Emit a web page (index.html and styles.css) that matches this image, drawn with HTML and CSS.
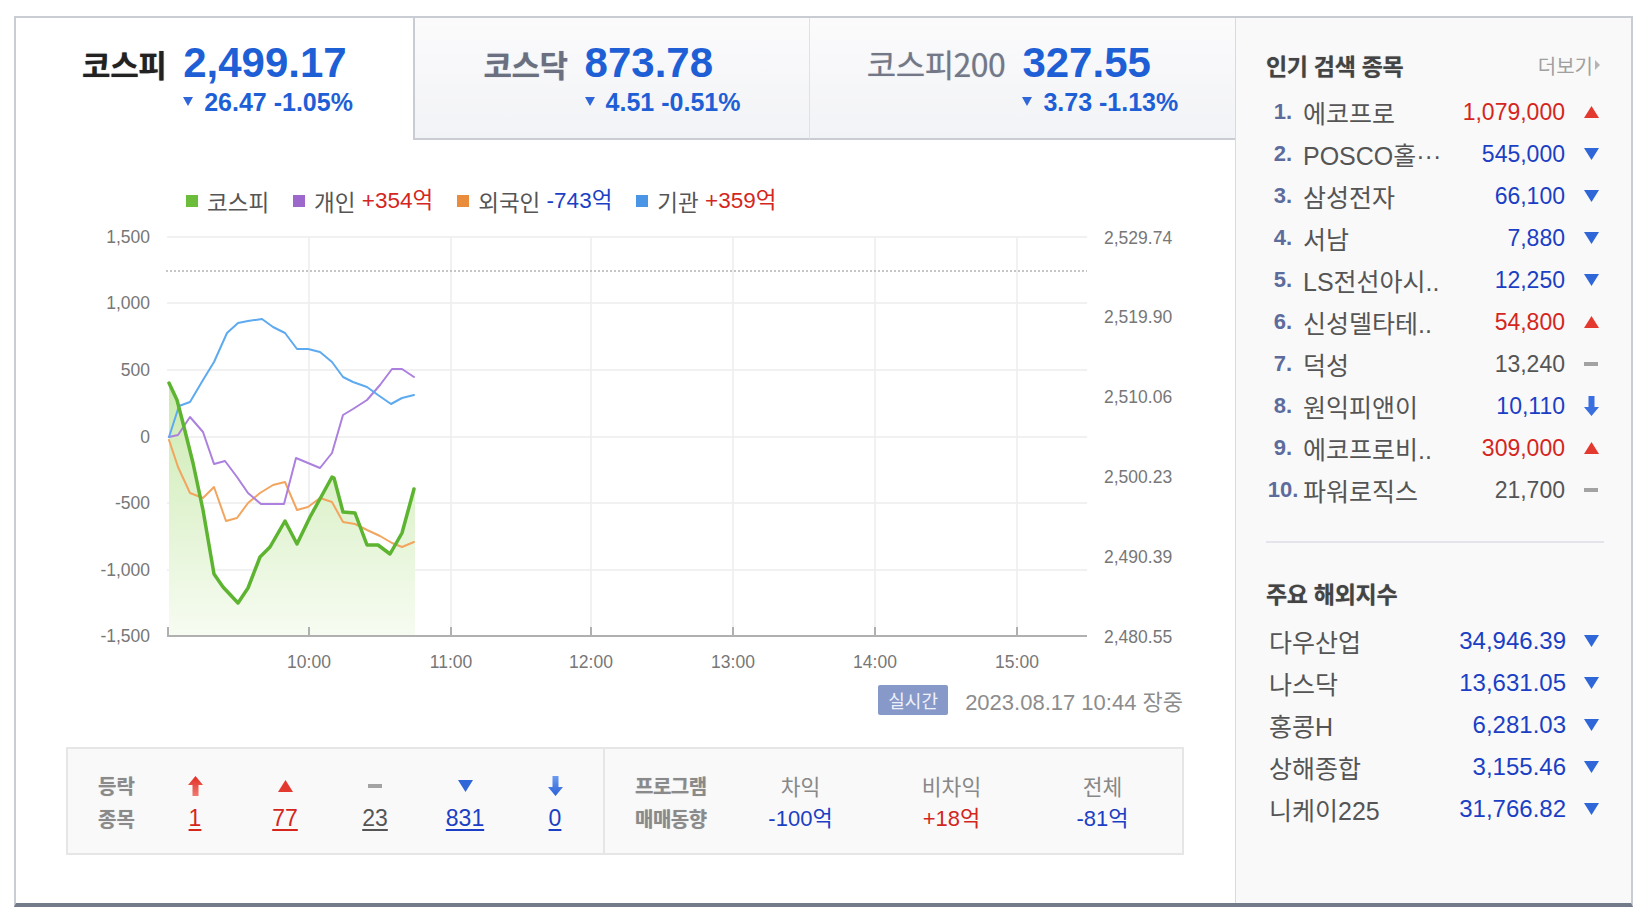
FILE: index.html
```html
<!DOCTYPE html>
<html lang="ko">
<head>
    <meta charset="UTF-8">
    <title>국내증시</title>
    <link rel="stylesheet" href="styles.css">
</head>
<body>
<div class="wrap">
    <div class="main">
        <!-- 지수 탭 -->
        <div class="tabs">
            <div class="tab on">
                <div class="tab-in">
                    <span class="idx-name">코스피</span>
                    <div class="idx-box">
                        <div class="idx-num">2,499.17</div>
                        <div class="idx-chg"><svg class="chg-tri" width="10" height="9" viewBox="0 0 10 9"><path d="M0 0H10L5 9Z" fill="#2f66d8"/></svg>26.47 -1.05%</div>
                    </div>
                </div>
            </div>
            <div class="tab">
                <div class="tab-in">
                    <span class="idx-name">코스닥</span>
                    <div class="idx-box">
                        <div class="idx-num">873.78</div>
                        <div class="idx-chg"><svg class="chg-tri" width="10" height="9" viewBox="0 0 10 9"><path d="M0 0H10L5 9Z" fill="#2f66d8"/></svg>4.51 -0.51%</div>
                    </div>
                </div>
            </div>
            <div class="tab">
                <div class="tab-in">
                    <span class="idx-name thin">코스피200</span>
                    <div class="idx-box">
                        <div class="idx-num">327.55</div>
                        <div class="idx-chg"><svg class="chg-tri" width="10" height="9" viewBox="0 0 10 9"><path d="M0 0H10L5 9Z" fill="#2f66d8"/></svg>3.73 -1.13%</div>
                    </div>
                </div>
            </div>
        </div>

        <!-- 범례 -->
        <div class="legend">
            <span class="lg"><i class="sq green"></i>코스피</span>
            <span class="lg"><i class="sq purple"></i>개인 <b class="up">+354억</b></span>
            <span class="lg"><i class="sq orange"></i>외국인 <b class="dn">-743억</b></span>
            <span class="lg"><i class="sq blue"></i>기관 <b class="up">+359억</b></span>
        </div>

        <!-- 차트 -->
        <svg class="chart" width="1130" height="460" viewBox="60 215 1130 460">
            <defs>
                <linearGradient id="gfill" gradientUnits="userSpaceOnUse" x1="0" y1="383" x2="0" y2="636">
                    <stop offset="0" stop-color="#cbeab0"/>
                    <stop offset="1" stop-color="#f7fcf2"/>
                </linearGradient>
            </defs>
            <g stroke="#ededed" stroke-width="1.5">
                <line x1="167" y1="237" x2="1087" y2="237"/>
                <line x1="167" y1="303" x2="1087" y2="303"/>
                <line x1="167" y1="370" x2="1087" y2="370"/>
                <line x1="167" y1="437" x2="1087" y2="437"/>
                <line x1="167" y1="503" x2="1087" y2="503"/>
                <line x1="167" y1="570" x2="1087" y2="570"/>
                <line x1="309" y1="237" x2="309" y2="636"/>
                <line x1="451" y1="237" x2="451" y2="636"/>
                <line x1="591" y1="237" x2="591" y2="636"/>
                <line x1="733" y1="237" x2="733" y2="636"/>
                <line x1="875" y1="237" x2="875" y2="636"/>
                <line x1="1017" y1="237" x2="1017" y2="636"/>
            </g>
            <line x1="166" y1="271" x2="1087" y2="271" stroke="#b4b4b4" stroke-width="1.5" stroke-dasharray="2 2"/>

            <path d="M169,383 L177,400 183,423 193,463 203,510 214,574 223,587 238,603 248,588 260,557 270,547 285,521 297,544 310,517 321,497 332,477 334,478 343,512 355,513 367,545 378,545 390,554 402,533 415,489 L415,636 L169,636 Z" fill="url(#gfill)"/>
            <g fill="none" stroke-linejoin="round" stroke-linecap="round">
                <polyline stroke="#f2a55e" stroke-width="2" points="169,440 178,467 190,493 203,498 214,487 226,521 237,518 248,503 260,493 273,485 285,482 297,510 308,507 320,498 332,502 343,522 355,524 367,530 380,536 392,543 402,547 414,542"/>
                <polyline stroke="#ab80de" stroke-width="2" points="169,437 178,435 190,417 203,432 214,464 225,461 237,477 248,493 261,504 284,504 296,458 308,463 320,468 332,453 343,415 353,409 367,400 380,385 392,369 402,369 414,377"/>
                <polyline stroke="#5eaaf0" stroke-width="2" points="169,437 179,406 190,402 203,380 214,362 227,333 238,323 248,321 262,319 273,327 285,333 297,349 308,349 320,352 332,362 343,377 353,382 367,387 378,395 391,404 402,398 414,395"/>
                <polyline stroke="#5db431" stroke-width="3.5" points="169,383 177,400 183,423 193,463 203,510 214,574 223,587 238,603 248,588 260,557 270,547 285,521 297,544 310,517 321,497 332,477 334,478 343,512 355,513 367,545 378,545 390,554 402,533 414,489"/>
            </g>

            <g stroke="#b0b0b0" stroke-width="2">
                <line x1="167" y1="636" x2="1087" y2="636"/>
                <line x1="168" y1="627" x2="168" y2="636"/>
                <line x1="309" y1="627" x2="309" y2="636"/>
                <line x1="451" y1="627" x2="451" y2="636"/>
                <line x1="591" y1="627" x2="591" y2="636"/>
                <line x1="733" y1="627" x2="733" y2="636"/>
                <line x1="875" y1="627" x2="875" y2="636"/>
                <line x1="1017" y1="627" x2="1017" y2="636"/>
            </g>

            <g class="ax" text-anchor="end">
                <text x="150" y="243">1,500</text>
                <text x="150" y="309">1,000</text>
                <text x="150" y="376">500</text>
                <text x="150" y="443">0</text>
                <text x="150" y="509">-500</text>
                <text x="150" y="576">-1,000</text>
                <text x="150" y="642">-1,500</text>
            </g>
            <g class="ax">
                <text x="1104" y="244">2,529.74</text>
                <text x="1104" y="323">2,519.90</text>
                <text x="1104" y="403">2,510.06</text>
                <text x="1104" y="483">2,500.23</text>
                <text x="1104" y="563">2,490.39</text>
                <text x="1104" y="643">2,480.55</text>
            </g>
            <g class="ax" text-anchor="middle">
                <text x="309" y="668">10:00</text>
                <text x="451" y="668">11:00</text>
                <text x="591" y="668">12:00</text>
                <text x="733" y="668">13:00</text>
                <text x="875" y="668">14:00</text>
                <text x="1017" y="668">15:00</text>
            </g>
        </svg>

        <div class="stamp">
            <span class="live">실시간</span>
            <span class="time">2023.08.17 10:44 장중</span>
        </div>

        <!-- 등락 / 프로그램 -->
        <div class="stats">
            <div class="updn">
                <div class="st-lbl">등락<br>종목</div>
                <div class="st-col">
                    <div class="st-ico"><svg width="15" height="20" viewBox="0 0 15 20"><defs><linearGradient id="ru" x1="0" y1="0" x2="0" y2="1"><stop offset="0" stop-color="#e32b22"/><stop offset="1" stop-color="#f07a70"/></linearGradient></defs><path d="M7.5 0L15 9H10.5V20H4.5V9H0Z" fill="url(#ru)"/></svg></div>
                    <a class="st-num up">1</a>
                </div>
                <div class="st-col">
                    <div class="st-ico"><svg width="15" height="12" viewBox="0 0 15 12"><path d="M7.5 0L15 12H0Z" fill="#e3392f"/></svg></div>
                    <a class="st-num up">77</a>
                </div>
                <div class="st-col">
                    <div class="st-ico"><svg width="14" height="4" viewBox="0 0 14 4"><rect width="14" height="4" fill="#a3a3a3"/></svg></div>
                    <a class="st-num eq">23</a>
                </div>
                <div class="st-col">
                    <div class="st-ico"><svg width="15" height="12" viewBox="0 0 15 12"><path d="M0 0H15L7.5 12Z" fill="#2f66d8"/></svg></div>
                    <a class="st-num dn">831</a>
                </div>
                <div class="st-col">
                    <div class="st-ico"><svg width="15" height="20" viewBox="0 0 15 20"><defs><linearGradient id="bd" x1="0" y1="0" x2="0" y2="1"><stop offset="0" stop-color="#6d9cf0"/><stop offset="1" stop-color="#2a62d6"/></linearGradient></defs><path d="M4.5 0H10.5V11H15L7.5 20L0 11H4.5Z" fill="url(#bd)"/></svg></div>
                    <a class="st-num dn">0</a>
                </div>
            </div>
            <div class="prog">
                <div class="st-lbl wide">프로그램<br>매매동향</div>
                <div class="pg-col">
                    <div class="pg-name">차익</div>
                    <div class="pg-val dn">-100억</div>
                </div>
                <div class="pg-col">
                    <div class="pg-name">비차익</div>
                    <div class="pg-val up">+18억</div>
                </div>
                <div class="pg-col">
                    <div class="pg-name">전체</div>
                    <div class="pg-val dn">-81억</div>
                </div>
            </div>
        </div>
    </div>

    <!-- 사이드 -->
    <div class="side">
        <div class="side-hd">
            <h3>인기 검색 종목</h3>
            <span class="more">더보기<svg width="5" height="10" viewBox="0 0 5 10"><path d="M0 0L5 5L0 10Z" fill="#b5b5b5"/></svg></span>
        </div>
        <ul class="rank">
            <li><span class="no">1.</span><span class="nm">에코프로</span><span class="pr up">1,079,000</span><span class="ico"><svg width="15" height="12" viewBox="0 0 15 12"><path d="M7.5 0L15 12H0Z" fill="#e3392f"/></svg></span></li>
            <li><span class="no">2.</span><span class="nm">POSCO홀···</span><span class="pr dn">545,000</span><span class="ico"><svg width="15" height="12" viewBox="0 0 15 12"><path d="M0 0H15L7.5 12Z" fill="#2f66d8"/></svg></span></li>
            <li><span class="no">3.</span><span class="nm">삼성전자</span><span class="pr dn">66,100</span><span class="ico"><svg width="15" height="12" viewBox="0 0 15 12"><path d="M0 0H15L7.5 12Z" fill="#2f66d8"/></svg></span></li>
            <li><span class="no">4.</span><span class="nm">서남</span><span class="pr dn">7,880</span><span class="ico"><svg width="15" height="12" viewBox="0 0 15 12"><path d="M0 0H15L7.5 12Z" fill="#2f66d8"/></svg></span></li>
            <li><span class="no">5.</span><span class="nm">LS전선아시..</span><span class="pr dn">12,250</span><span class="ico"><svg width="15" height="12" viewBox="0 0 15 12"><path d="M0 0H15L7.5 12Z" fill="#2f66d8"/></svg></span></li>
            <li><span class="no">6.</span><span class="nm">신성델타테..</span><span class="pr up">54,800</span><span class="ico"><svg width="15" height="12" viewBox="0 0 15 12"><path d="M7.5 0L15 12H0Z" fill="#e3392f"/></svg></span></li>
            <li><span class="no">7.</span><span class="nm">덕성</span><span class="pr eq">13,240</span><span class="ico"><svg width="14" height="4" viewBox="0 0 14 4"><rect width="14" height="4" fill="#a3a3a3"/></svg></span></li>
            <li><span class="no">8.</span><span class="nm">원익피앤이</span><span class="pr dn">10,110</span><span class="ico"><svg width="15" height="22" viewBox="0 0 15 20"><path d="M4.5 0H10.5V11H15L7.5 20L0 11H4.5Z" fill="#3a6fe0"/></svg></span></li>
            <li><span class="no">9.</span><span class="nm">에코프로비..</span><span class="pr up">309,000</span><span class="ico"><svg width="15" height="12" viewBox="0 0 15 12"><path d="M7.5 0L15 12H0Z" fill="#e3392f"/></svg></span></li>
            <li><span class="no">10.</span><span class="nm">파워로직스</span><span class="pr eq">21,700</span><span class="ico"><svg width="14" height="4" viewBox="0 0 14 4"><rect width="14" height="4" fill="#a3a3a3"/></svg></span></li>
        </ul>

        <div class="side-line"></div>

        <div class="side-hd second">
            <h3>주요 해외지수</h3>
        </div>
        <ul class="rank world">
            <li><span class="nm">다우산업</span><span class="pr dn">34,946.39</span><span class="ico"><svg width="15" height="12" viewBox="0 0 15 12"><path d="M0 0H15L7.5 12Z" fill="#2f66d8"/></svg></span></li>
            <li><span class="nm">나스닥</span><span class="pr dn">13,631.05</span><span class="ico"><svg width="15" height="12" viewBox="0 0 15 12"><path d="M0 0H15L7.5 12Z" fill="#2f66d8"/></svg></span></li>
            <li><span class="nm">홍콩H</span><span class="pr dn">6,281.03</span><span class="ico"><svg width="15" height="12" viewBox="0 0 15 12"><path d="M0 0H15L7.5 12Z" fill="#2f66d8"/></svg></span></li>
            <li><span class="nm">상해종합</span><span class="pr dn">3,155.46</span><span class="ico"><svg width="15" height="12" viewBox="0 0 15 12"><path d="M0 0H15L7.5 12Z" fill="#2f66d8"/></svg></span></li>
            <li><span class="nm">니케이225</span><span class="pr dn">31,766.82</span><span class="ico"><svg width="15" height="12" viewBox="0 0 15 12"><path d="M0 0H15L7.5 12Z" fill="#2f66d8"/></svg></span></li>
        </ul>
    </div>
</div>
</body>
</html>
```

FILE: styles.css
```css
* {
    margin: 0;
    padding: 0;
    box-sizing: border-box;
}

body {
    font-family: "Liberation Sans", "Noto Sans CJK KR", sans-serif;
    background: #fff;
    color: #555;
}

ul {
    list-style: none;
}

/* 바깥 박스 */
.wrap {
    display: flex;
    width: 1619px;
    height: 891px;
    margin: 16px 0 0 14px;
    border: 2px solid #c9ccd2;
    border-bottom: 4px solid #737a8a;
}

.main {
    width: 1219px;
    display: flex;
    flex-direction: column;
}

/* 지수 탭 */
.tabs {
    display: flex;
    height: 122px;
}

.tab {
    display: flex;
    justify-content: center;
    padding-top: 22px;
    background: linear-gradient(#fbfbfc, #f2f3f6);
    border-bottom: 2px solid #c9ccd2;
    border-left: 1px solid #dfe1e5;
}

.tab:nth-child(1) {
    width: 397px;
    padding-left: 6px;
}

.tab:nth-child(2) {
    width: 396px;
    border-left: 2px solid #c9ccd2;
}

.tab:nth-child(3) {
    flex: 1;
}

.tab.on {
    background: #fff;
    border: none;
}

.tab-in {
    display: flex;
    align-items: baseline;
    gap: 17px;
}

.idx-name {
    font-family: "Noto Sans CJK KR", sans-serif;
    font-size: 31px;
    font-weight: bold;
    line-height: 46px;
    color: #6b7080;
    letter-spacing: -0.5px;
    text-shadow: 0 0 1px rgba(90, 95, 110, 0.4);
}

.on .idx-name {
    color: #222;
    text-shadow: 0 0 1px rgba(0, 0, 0, 0.5);
}

.idx-name.thin {
    font-weight: normal;
    font-size: 32px;
    color: #737888;
}

.idx-num {
    font-size: 42px;
    font-weight: bold;
    line-height: 46px;
    color: #1f5fd6;
}

.idx-chg {
    margin-top: 2px;
    font-size: 25px;
    font-weight: bold;
    line-height: 28px;
    color: #1f5fd6;
    display: flex;
    align-items: center;
}

.chg-tri {
    margin-right: 11px;
    margin-top: -2px;
}

/* 범례 */
.legend {
    display: flex;
    gap: 24px;
    margin: 48px 0 0 170px;
    height: 26px;
    font-family: "Noto Sans CJK KR", sans-serif;
    font-size: 22.5px;
    line-height: 26px;
    color: #555;
}

.lg {
    display: flex;
    align-items: center;
    white-space: pre;
}

.lg b {
    font-family: "Liberation Sans", "Noto Sans CJK KR", sans-serif;
    font-weight: normal;
}

.sq {
    width: 12px;
    height: 12px;
    margin-right: 9px;
}

.sq.green { background: #6bbd3b; }
.sq.purple { background: #9d68cc; }
.sq.orange { background: #e98c3c; }
.sq.blue { background: #4a95e6; }

.up { color: #d4261d; }
.dn { color: #1b3fc4; }
.eq { color: #555; }

/* 차트 */
.chart {
    display: block;
    margin: 1px 0 0 44px;
}

.ax {
    font-family: "Liberation Sans", sans-serif;
    font-size: 17.5px;
    fill: #777;
}

.stamp {
    display: flex;
    justify-content: flex-end;
    align-items: center;
    gap: 17px;
    margin-top: 10px;
    padding-right: 52px;
    height: 30px;
}

.live {
    width: 70px;
    height: 30px;
    background: #8799c9;
    border-radius: 2px;
    color: #eef1fa;
    font-family: "Noto Sans CJK KR", sans-serif;
    font-size: 18px;
    line-height: 30px;
    text-align: center;
}

.time {
    font-size: 22px;
    color: #8c8c8c;
}

/* 등락 / 프로그램 */
.stats {
    display: flex;
    width: 1118px;
    height: 108px;
    margin: 32px 0 0 50px;
    border: 2px solid #e6e6e6;
    background: #f9f9f9;
}

.updn {
    display: flex;
    width: 537px;
    padding: 20px 0 0 30px;
    border-right: 2px solid #e6e6e6;
}

.prog {
    display: flex;
    flex: 1;
    padding: 20px 0 0 30px;
}

.st-lbl {
    width: 52px;
    font-family: "Noto Sans CJK KR", sans-serif;
    font-size: 20px;
    font-weight: bold;
    line-height: 33px;
    color: #8a8a8a;
    text-shadow: 0 0 1px rgba(0, 0, 0, 0.25);
}

.st-lbl.wide {
    width: 90px;
    letter-spacing: -0.5px;
}

.st-col {
    width: 90px;
    display: flex;
    flex-direction: column;
    align-items: center;
}

.st-ico {
    height: 33px;
    display: flex;
    align-items: center;
}

.st-num {
    font-size: 23px;
    line-height: 33px;
    text-decoration: underline;
    text-underline-offset: 3px;
}

.pg-col {
    width: 151px;
    text-align: center;
}

.pg-name {
    font-family: "Noto Sans CJK KR", sans-serif;
    font-size: 21.5px;
    line-height: 33px;
    color: #888;
}

.pg-val {
    font-size: 22px;
    line-height: 33px;
}

/* 사이드 */
.side {
    flex: 1;
    background: #f9f9f9;
    border-left: 1px solid #d8dadf;
    padding: 32px 27px 0 30px;
}

.side-hd {
    display: flex;
    justify-content: space-between;
    align-items: center;
    height: 30px;
}

.side-hd.second {
    margin-top: 35px;
}

.side-hd h3 {
    font-family: "Noto Sans CJK KR", sans-serif;
    font-size: 23px;
    font-weight: bold;
    color: #444;
    letter-spacing: -0.3px;
    text-shadow: 0 0 1px rgba(0, 0, 0, 0.4);
}

.more {
    display: flex;
    align-items: center;
    gap: 2px;
    margin-right: 4px;
    font-family: "Noto Sans CJK KR", sans-serif;
    font-size: 20px;
    color: #a0a0a0;
}

.rank {
    margin-top: 11px;
}

.world {
    margin-top: 12px;
}

.rank li {
    display: flex;
    align-items: center;
    height: 42px;
}

.no {
    width: 34px;
    text-align: center;
    font-size: 22px;
    font-weight: bold;
    color: #5d6c9c;
}

.nm {
    flex: 1;
    margin-left: 3px;
    font-family: "Liberation Sans", "Noto Sans CJK KR", sans-serif;
    font-size: 25px;
    color: #555;
    white-space: nowrap;
}

.pr {
    font-size: 23px;
    text-align: right;
}

.world .pr {
    font-size: 24px;
    margin-right: -1px;
}

.ico {
    width: 26px;
    margin-left: 13px;
    display: flex;
    justify-content: center;
    align-items: center;
}

.side-line {
    height: 2px;
    margin-top: 30px;
    background: #e4e4ea;
}
```
